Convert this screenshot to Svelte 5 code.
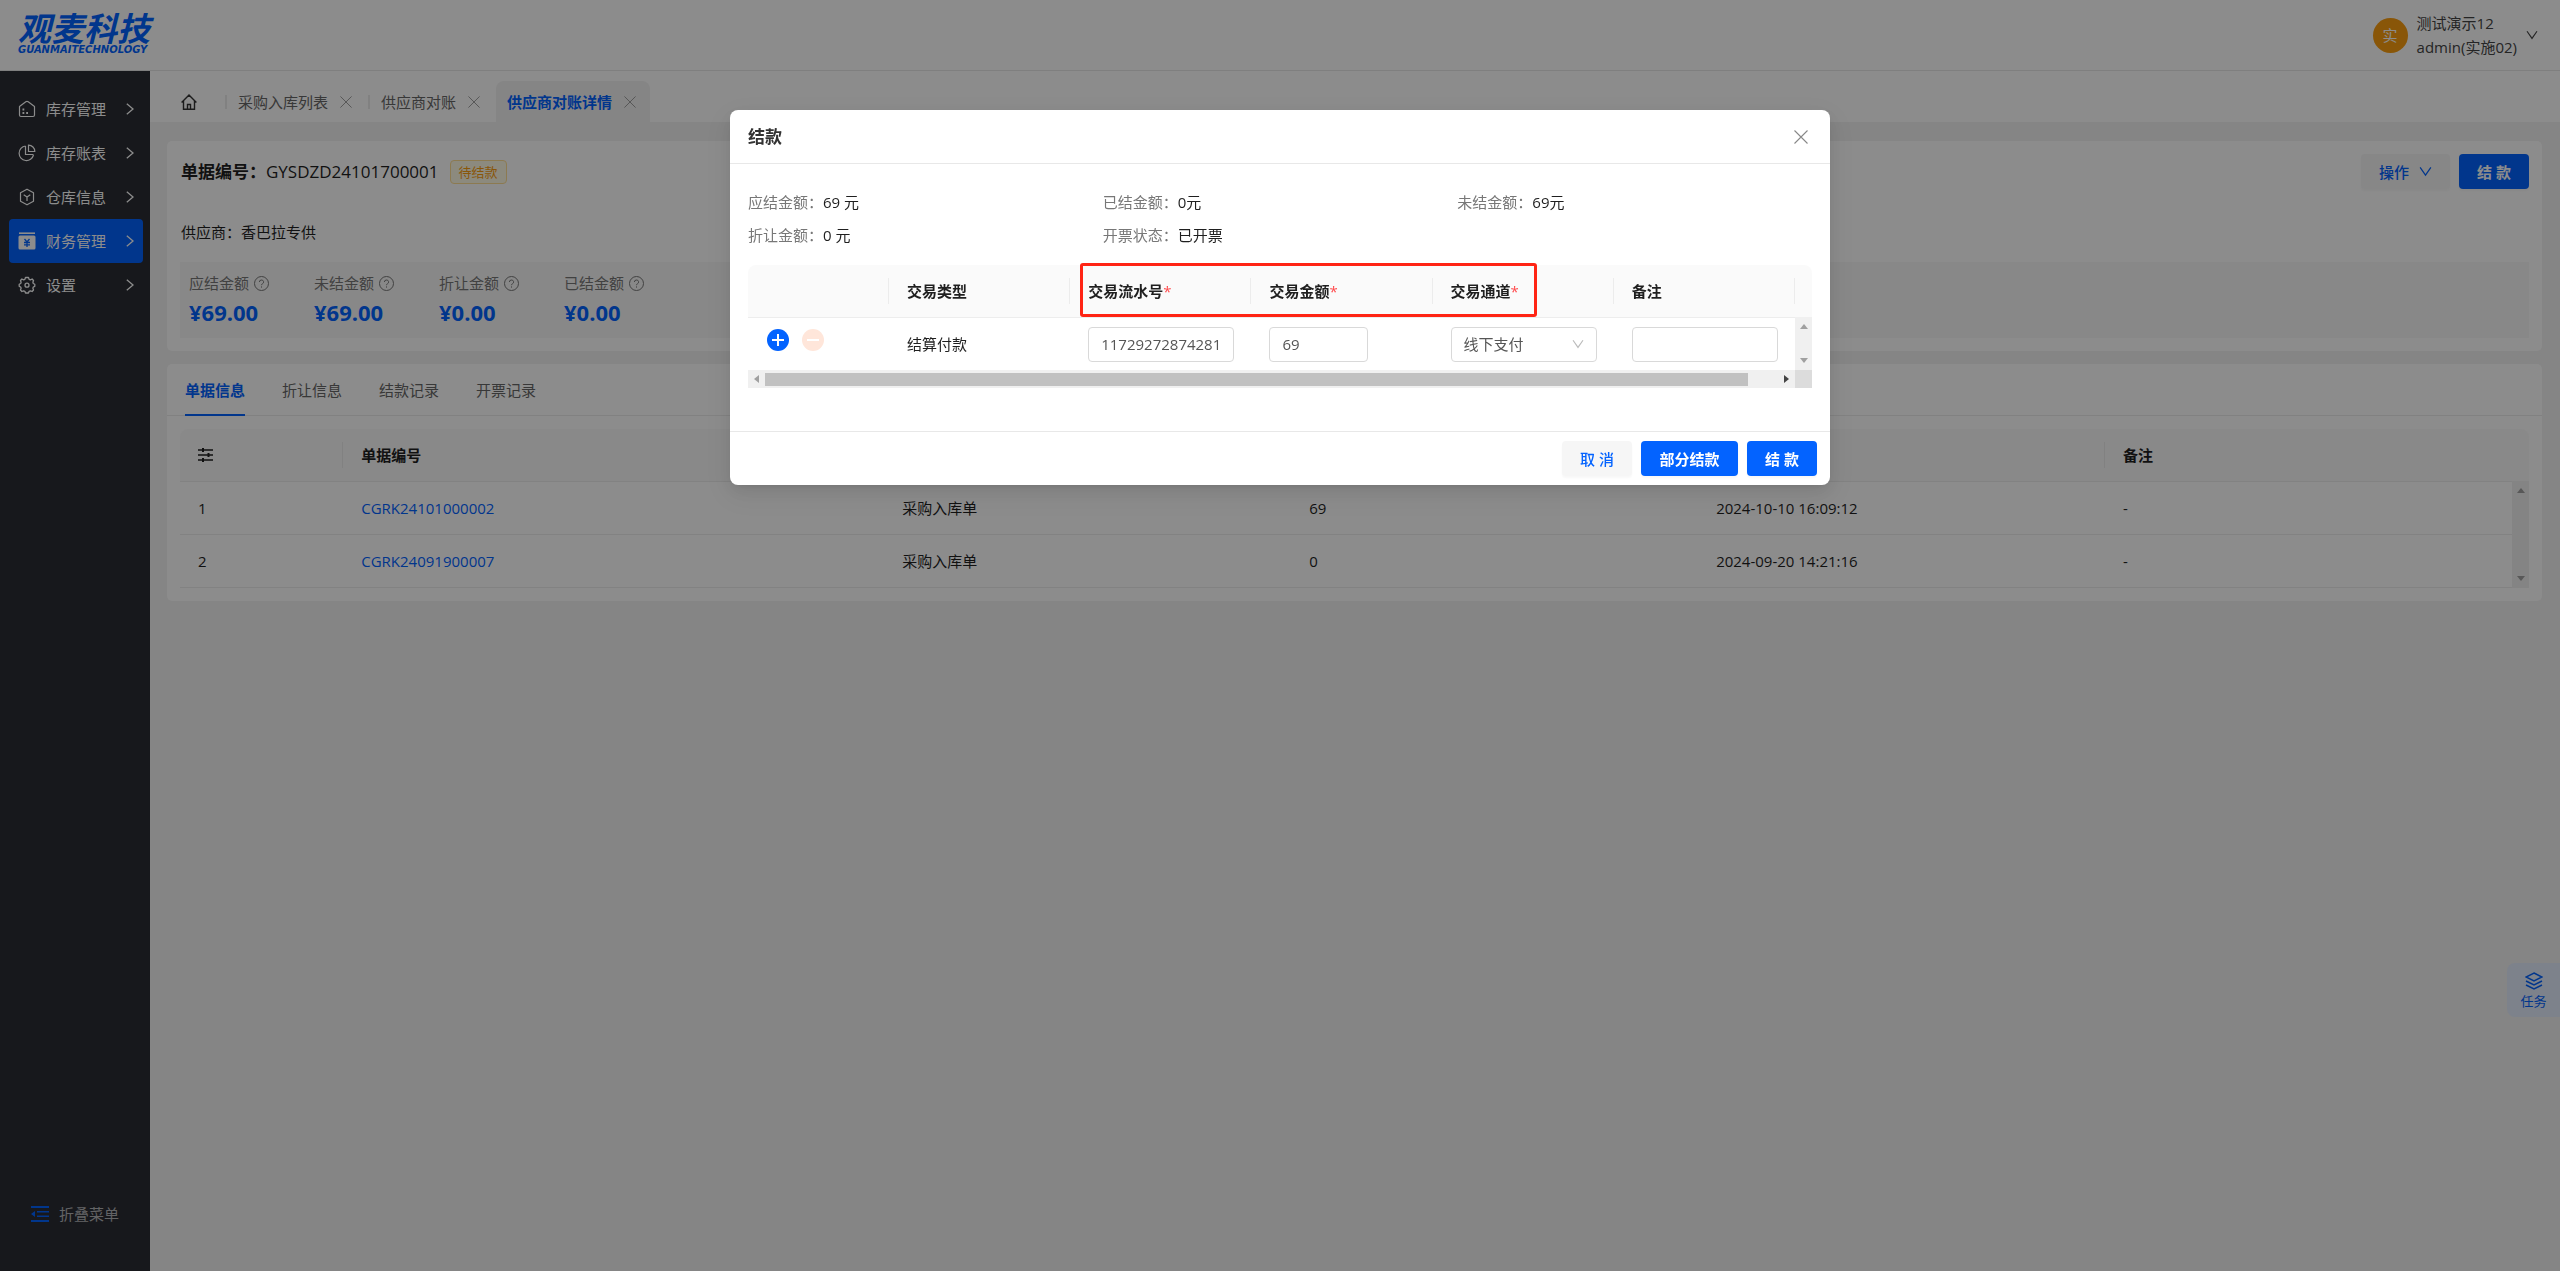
<script lang="ts">
  let menus = [
    { name: '库存管理', icon: 'house' },
    { name: '库存账表', icon: 'pie' },
    { name: '仓库信息', icon: 'hex' },
    { name: '财务管理', icon: 'money' },
    { name: '设置', icon: 'gear' }
  ];

  let tabs = ['采购入库列表', '供应商对账', '供应商对账详情'];
  let detailTabs = ['单据信息', '折让信息', '结款记录', '开票记录'];

  let summary = [
    { label: '应结金额', value: '¥69.00' },
    { label: '未结金额', value: '¥69.00' },
    { label: '折让金额', value: '¥0.00' },
    { label: '已结金额', value: '¥0.00' }
  ];

  let rows = [
    { code: 'CGRK24101000002', type: '采购入库单', amount: '69', time: '2024-10-10 16:09:12', remark: '-' },
    { code: 'CGRK24091900007', type: '采购入库单', amount: '0', time: '2024-09-20 14:21:16', remark: '-' }
  ];

  let info = [
    { label: '应结金额', value: '69 元' },
    { label: '已结金额', value: '0元' },
    { label: '未结金额', value: '69元' },
    { label: '折让金额', value: '0 元' },
    { label: '开票状态', value: '已开票' }
  ];

  let activeMenu = $state('财务管理');
  let activeTab = $state('供应商对账详情');
  let activeDetail = $state('单据信息');
  let open = $state(true);

  let serial = $state('11729272874281');
  let amount = $state('69');
  let channel = $state('线下支付');
  let remark = $state('');
</script>

{#snippet cross(size: number)}
  <svg width={size} height={size} viewBox="0 0 14 14" fill="none" stroke="currentColor" stroke-width="1.1">
    <path d="M.5.5l13 13M13.5.5l-13 13" />
  </svg>
{/snippet}

{#snippet down(size: number)}
  <svg width={size} height={size} viewBox="0 0 14 14" fill="none" stroke="currentColor" stroke-width="1.3">
    <path d="M1.2 2.6L7 11l5.800-8.400" />
  </svg>
{/snippet}

{#snippet vscroll()}
  <div class="vscroll">
    <svg width="8" height="5" viewBox="0 0 8 5"><path d="M0 5L4 0l4 5z" fill="#a0a0a0" /></svg>
    <svg width="8" height="5" viewBox="0 0 8 5"><path d="M0 0l4 5 4-5z" fill="#a0a0a0" /></svg>
  </div>
{/snippet}

<div class="app">
  <header class="header">
    <div class="logo">
      <span class="logo-cn">观麦科技</span>
      <span class="logo-en">GUANMAITECHNOLOGY</span>
    </div>
    <div class="user">
      <span class="avatar">实</span>
      <div class="user-text">
        <div>测试演示12</div>
        <div>admin(实施02)</div>
      </div>
      {@render down(12)}
    </div>
  </header>

  <div class="main">
    <nav class="sidebar">
      <div class="menus">
        {#each menus as m}
          <button class="menu" class:active={m.name === activeMenu} onclick={() => (activeMenu = m.name)}>
            <svg class="menu-icon" width="18" height="18" viewBox="0 0 18 18" fill="none" stroke="currentColor" stroke-width="1.2">
              {#if m.icon === 'house'}
                <path d="M1.500 6.500L7.800 1.800a2 2 0 0 1 2.400 0L16.500 6.500V15a1.500 1.500 0 0 1-1.500 1.500H3A1.500 1.500 0 0 1 1.500 15z" stroke-linejoin="round" />
                <path d="M4.500 9.500h1.800M4.500 13h1.800M8.200 13H10" stroke-width="1.800" />
              {:else if m.icon === 'pie'}
                <path d="M7.500 2A7.300 7.300 0 1 0 15.500 11" />
                <path d="M7.500 2v8.500h8" />
                <path d="M10.500 1.200v6.300h6.300a6.300 6.300 0 0 0-6.300-6.300z" />
              {:else if m.icon === 'hex'}
                <path d="M9 1.200L15.500 4.800v8.400L9 16.800 2.500 13.200V4.800z" stroke-linejoin="round" />
                <path d="M5.700 6.800L9 9l3.300-2.200M9 9v4" />
              {:else if m.icon === 'money'}
                <path d="M1 1.200h16" stroke-width="1.600" />
                <path d="M2 3.500h14a1.500 1.500 0 0 1 1.500 1.500v11a1.500 1.500 0 0 1-1.500 1.500H2A1.500 1.500 0 0 1 .5 16V5A1.500 1.500 0 0 1 2 3.500z" fill="currentColor" stroke="none" />
                <path d="M6.500 7L9 10l2.500-3M9 10v5M6 10.500h6M6 12.800h6" stroke="#0363ff" stroke-width="1.300" />
              {:else}
                <path d="M7.500 1.500h3l.6 1.800 1.300.5 1.700-.8 1.400 1.500-.6 1.800.4 1.200 1.500.8v2l-1.500.7-.4 1.300.6 1.700-1.400 1.500-1.700-.7-1.300.5-.6 1.700h-3l-.6-1.700-1.300-.5-1.700.7L2.500 14l.6-1.700-.4-1.300-1.500-.7v-2l1.500-.8.4-1.200-.6-1.800L3.900 3l1.700.8 1.300-.5z" stroke-width="1.300" stroke-linejoin="round" />
                <circle cx="9" cy="9.200" r="2" stroke-width="1.300" />
              {/if}
            </svg>
            <span>{m.name}</span>
            <svg width="8" height="12" viewBox="0 0 8 12" fill="none" stroke="currentColor" stroke-width="1.3"><path d="M.8.8L7 6 .8 11.200" /></svg>
          </button>
        {/each}
      </div>
      <button class="fold">
        <svg width="18" height="16" viewBox="0 0 18 16" fill="#0363ff">
          <path d="M0 0h18v2H0zM6 5h12v1.500H6zM6 9.500h12V11H6zM0 14h18v2H0zM0 8l4-3v6z" />
        </svg>
        折叠菜单
      </button>
    </nav>

    <div class="body">
      <div class="tabs">
        <button class="home" aria-label="首页">
          <svg width="16" height="16" viewBox="0 0 16 16" fill="none" stroke="currentColor" stroke-width="1.400">
            <path d="M.6 8.400L8 1l7.400 7.400M2.500 7v8.200h11V7M6.500 15v-4.500h3V15" />
          </svg>
        </button>
        {#each tabs as t}
          <div class="tab" class:active={t === activeTab}>
            <button onclick={() => (activeTab = t)}>{t}</button>
            <button class="tab-close" aria-label="关闭">{@render cross(12)}</button>
          </div>
        {/each}
      </div>

      <div class="content">
        <section class="card">
          <div class="title-row">
            <h1>单据编号：<span>GYSDZD24101700001</span></h1>
            <span class="tag">待结款</span>
            <div class="actions">
              <button class="btn">操作 {@render down(13)}</button>
              <button class="btn primary" onclick={() => (open = true)}>结 款</button>
            </div>
          </div>
          <p class="supplier">供应商：香巴拉专供</p>
          <div class="summary">
            {#each summary as s}
              <div class="sum-item">
                <div class="sum-label">
                  {s.label}
                  <svg width="15" height="15" viewBox="0 0 15 15" fill="none" stroke="currentColor">
                    <circle cx="7.500" cy="7.500" r="7" />
                    <path d="M5.400 6a2.100 2 0 1 1 3 1.800c-.6.300-.9.600-.9 1.400M7.500 10.400v1.200" />
                  </svg>
                </div>
                <div class="sum-value">{s.value}</div>
              </div>
            {/each}
          </div>
        </section>

        <section class="card detail">
          <div class="detail-tabs">
            {#each detailTabs as t}
              <button class:active={t === activeDetail} onclick={() => (activeDetail = t)}>{t}</button>
            {/each}
          </div>
          <div class="grid">
            <table class="list">
              <thead>
                <tr>
                  <th class="col-no">
                    <svg width="15" height="14" viewBox="0 0 15 14" fill="none" stroke="currentColor" stroke-width="1.400">
                      <path d="M0 2h15M0 7h15M0 12h15" />
                      <path d="M5 0v4M10.500 5v4M5 10v4" stroke-width="2" />
                    </svg>
                  </th>
                  <th class="col-code">单据编号</th>
                  <th>单据类型</th>
                  <th>金额</th>
                  <th>时间</th>
                  <th>备注</th>
                </tr>
              </thead>
              <tbody>
                {#each rows as r, i}
                  <tr>
                    <td>{i + 1}</td>
                    <td><a href="#{r.code}">{r.code}</a></td>
                    <td>{r.type}</td>
                    <td>{r.amount}</td>
                    <td>{r.time}</td>
                    <td>{r.remark}</td>
                  </tr>
                {/each}
              </tbody>
            </table>
            <div class="gutter">
              {@render vscroll()}
            </div>
          </div>
        </section>
      </div>
    </div>
  </div>

  <button class="task">
    <svg width="18" height="18" viewBox="0 0 18 18" fill="none" stroke="currentColor" stroke-width="1.500">
      <path d="M9 1l8 4-8 4-8-4zM1 9l8 4 8-4M1 13l8 4 8-4" />
    </svg>
    任务
  </button>
</div>

{#if open}
  <div class="mask">
    <div class="modal" role="dialog" aria-modal="true" aria-labelledby="modal-title">
      <div class="modal-head">
        <h2 id="modal-title">结款</h2>
        <button class="close" aria-label="关闭" onclick={() => (open = false)}>{@render cross(14)}</button>
      </div>

      <div class="modal-body">
        <div class="info">
          {#each info as item}
            <div><span>{item.label}：</span>{item.value}</div>
          {/each}
        </div>

        <div class="grid">
          <table class="pay">
            <thead>
              <tr>
                <th class="col-op"></th>
                <th>交易类型</th>
                <th>交易流水号<i>*</i></th>
                <th>交易金额<i>*</i></th>
                <th>交易通道<i>*</i></th>
                <th>备注</th>
              </tr>
            </thead>
            <tbody>
              <tr>
                <td>
                  <div class="ops">
                    <button class="round" aria-label="添加">
                      <svg width="12" height="12" viewBox="0 0 12 12" stroke="#fff" stroke-width="2"><path d="M0 6h12M6 0v12" /></svg>
                    </button>
                    <button class="round off" aria-label="删除" disabled>
                      <svg width="12" height="12" viewBox="0 0 12 12" stroke="#fff" stroke-width="2"><path d="M0 6h12" /></svg>
                    </button>
                  </div>
                </td>
                <td>结算付款</td>
                <td><input aria-label="交易流水号" bind:value={serial} /></td>
                <td><input class="short" aria-label="交易金额" bind:value={amount} /></td>
                <td>
                  <div class="select">
                    <select aria-label="交易通道" bind:value={channel}>
                      <option>线下支付</option>
                    </select>
                    {@render down(12)}
                  </div>
                </td>
                <td><input aria-label="备注" bind:value={remark} /></td>
              </tr>
            </tbody>
          </table>
          <div class="gutter">
            {@render vscroll()}
          </div>
          <div class="highlight"></div>
        </div>
        <div class="hscroll">
          <div class="track">
            <svg width="5" height="8" viewBox="0 0 5 8"><path d="M5 0v8L0 4z" fill="#a0a0a0" /></svg>
            <div class="rail"><div class="thumb"></div></div>
            <svg width="5" height="8" viewBox="0 0 5 8"><path d="M0 0v8l5-4z" fill="#444" /></svg>
          </div>
          <div class="corner"></div>
        </div>
      </div>

      <div class="modal-foot">
        <button class="btn" onclick={() => (open = false)}>取 消</button>
        <button class="btn primary wide">部分结款</button>
        <button class="btn primary">结 款</button>
      </div>
    </div>
  </div>
{/if}

<style>
  :global(body) {
    font-family: "Open Sans", "Noto Sans CJK SC", sans-serif;
    font-size: 15px;
    line-height: 24px;
    color: #1f1f1f;
  }

  * {
    box-sizing: border-box;
  }

  button {
    font: inherit;
    color: inherit;
    background: none;
    border: none;
    padding: 0;
    cursor: pointer;
  }

  svg {
    display: block;
    flex: none;
  }

  h1, h2, p {
    margin: 0;
  }

  a {
    color: #0363ff;
    text-decoration: none;
  }

  .app {
    display: flex;
    flex-direction: column;
    min-height: 100vh;
    background: #f2f2f2;
  }

  .header {
    display: flex;
    justify-content: space-between;
    align-items: center;
    height: 71px;
    padding: 0 22px 0 18px;
    background: #fff;
    border-bottom: 1px solid #e8e8e8;
  }

  .logo {
    display: flex;
    flex-direction: column;
    color: #0363ff;
    font-weight: 700;
    font-style: italic;
  }

  .logo-cn {
    font-family: "Noto Sans CJK SC", sans-serif;
    font-size: 33px;
    line-height: 30px;
  }

  .logo-en {
    font-family: "DejaVu Sans", sans-serif;
    font-size: 10px;
    line-height: 16px;
  }

  .user {
    display: flex;
    align-items: center;
    gap: 9px;
    color: #444;
  }

  .avatar {
    width: 35px;
    height: 35px;
    line-height: 35px;
    border-radius: 50%;
    text-align: center;
    background: #fa9d0f;
    color: #fff;
  }

  .main {
    display: flex;
    flex: 1;
  }

  .sidebar {
    display: flex;
    flex-direction: column;
    justify-content: space-between;
    width: 150px;
    padding: 16px 7px 45px 9px;
    background: #2a2c33;
    color: #fff;
  }

  .menu {
    display: flex;
    align-items: center;
    gap: 10px;
    width: 100%;
    height: 44px;
    padding: 0 9px;
    border-radius: 4px;
    text-align: left;
  }

  .menu span {
    flex: 1;
  }

  .menu.active {
    background: #0363ff;
  }

  .fold {
    display: flex;
    align-items: center;
    gap: 10px;
    padding-left: 22px;
    color: #b5b5b8;
  }

  .body {
    flex: 1;
    min-width: 0;
  }

  .tabs {
    display: flex;
    align-items: flex-end;
    height: 51px;
    padding-left: 31px;
    background: #fff;
    color: #666;
  }

  .home {
    display: flex;
    align-items: center;
    width: 44px;
    height: 41px;
    color: #333;
  }

  .tab {
    display: flex;
    align-items: center;
    gap: 11px;
    height: 41px;
    padding-right: 15px;
    border-radius: 8px 8px 0 0;
  }

  .tab::before {
    content: '';
    width: 2px;
    height: 14px;
    background: #ebebeb;
  }

  .tab.active {
    padding: 0 13px 0 11px;
    background: #f2f2f2;
    color: #0363ff;
    font-weight: 700;
  }

  .tab.active::before {
    display: none;
  }

  .tab-close {
    padding: 0 1px;
    color: #999;
  }

  .content {
    display: flex;
    flex-direction: column;
    gap: 13px;
    padding: 19px 18px 19px 17px;
  }

  .card {
    padding: 13px;
    background: #fff;
    border-radius: 5px;
  }

  .title-row {
    display: flex;
    align-items: center;
    gap: 11px;
    height: 35px;
    padding-left: 1px;
  }

  h1 {
    font-size: 17px;
    font-weight: 700;
  }

  h1 span {
    font-weight: 400;
  }

  .tag {
    padding: 0 8px;
    border: 1px solid #ffdf94;
    border-radius: 4px;
    background: #fffbe6;
    color: #fa9d0f;
    font-size: 13px;
    line-height: 22px;
  }

  .actions {
    display: flex;
    gap: 9px;
    margin-left: auto;
  }

  .btn {
    display: flex;
    align-items: center;
    justify-content: center;
    gap: 10px;
    height: 35px;
    min-width: 70px;
    padding: 0 18px;
    border-radius: 4px;
    background: #f6f6f6;
    color: #0363ff;
    font-weight: 500;
    box-shadow: 0 2px 2px rgba(0, 0, 0, 0.03);
  }

  .btn.primary {
    padding: 0;
    background: #0363ff;
    color: #fff;
    font-weight: 700;
  }

  .btn.wide {
    width: 97px;
  }

  .supplier {
    padding: 31px 1px 18px;
  }

  .summary {
    display: flex;
    height: 76px;
    padding: 9px;
    background: #f8f8f8;
  }

  .sum-item {
    width: 125px;
  }

  .sum-label {
    display: flex;
    align-items: center;
    gap: 5px;
    color: #777;
  }

  .sum-value {
    color: #0363ff;
    font-size: 22px;
    font-weight: 700;
    line-height: 34px;
  }

  .detail {
    padding-top: 0;
  }

  .detail-tabs {
    display: flex;
    gap: 37px;
    height: 52px;
    margin: 0 -13px 13px;
    padding: 0 18px;
    border-bottom: 1px solid #ececec;
    color: #666;
  }

  .detail-tabs button {
    height: 52px;
    padding-top: 2px;
    border-bottom: 2px solid transparent;
  }

  .detail-tabs .active {
    border-color: #0363ff;
    color: #0363ff;
    font-weight: 700;
  }

  .grid {
    position: relative;
    display: flex;
    border-radius: 8px 8px 0 0;
    background: linear-gradient(#fafafa, #fafafa) top / 100% 52px no-repeat;
  }

  table {
    flex: 1;
    width: 100%;
    min-width: 0;
    table-layout: fixed;
    border-collapse: separate;
    border-spacing: 0;
  }

  th, td {
    height: 53px;
    padding: 0 18px;
    border-bottom: 1px solid #ededed;
    text-align: left;
    white-space: nowrap;
  }

  th {
    background: linear-gradient(#ececec, #ececec) right / 1px 26px no-repeat;
    font-weight: 700;
  }

  .list .col-no {
    width: 7%;
  }

  .list .col-code {
    width: 23.2%;
  }

  .list th:last-child {
    background: none;
  }

  .gutter {
    display: flex;
    width: 17px;
    padding-top: 52px;
  }

  .vscroll {
    display: flex;
    flex: 1;
    flex-direction: column;
    align-items: center;
    justify-content: space-between;
    padding: 7px 0;
    background: #f0f0f0;
  }

  .task {
    position: fixed;
    right: 0;
    top: 963px;
    display: flex;
    flex-direction: column;
    align-items: center;
    gap: 1px;
    width: 53px;
    height: 54px;
    padding-top: 9px;
    border-radius: 8px 0 0 8px;
    background: #e4edfd;
    color: #0363ff;
    font-size: 13px;
    line-height: 20px;
  }

  .mask {
    position: fixed;
    inset: 0;
    padding-top: 110px;
    background: rgba(0, 0, 0, 0.45);
  }

  .modal {
    width: 1100px;
    max-width: 100%;
    margin: 0 auto;
    border-radius: 8px;
    background: #fff;
    box-shadow: 0 3px 6px -4px rgba(0, 0, 0, 0.12), 0 6px 16px rgba(0, 0, 0, 0.08), 0 9px 28px 8px rgba(0, 0, 0, 0.05);
  }

  .modal-head {
    display: flex;
    align-items: center;
    justify-content: space-between;
    height: 54px;
    padding: 0 22px 0 18px;
    border-bottom: 1px solid #e8e8e8;
  }

  h2 {
    font-size: 17px;
    font-weight: 700;
    color: #333;
  }

  .close {
    color: #888;
  }

  .modal-body {
    padding: 22px 18px 43px;
  }

  .info {
    display: grid;
    grid-template-columns: repeat(3, 1fr);
    padding-bottom: 13px;
    line-height: 33px;
  }

  .info span {
    color: #777;
  }

  .pay .col-op {
    width: 141px;
  }

  .pay td {
    height: 52px;
    border-bottom: none;
  }

  i {
    color: #ff4d4f;
    font-style: normal;
    font-weight: 400;
  }

  .ops {
    display: flex;
    gap: 13px;
    padding: 0 1px 9px;
  }

  .round {
    display: flex;
    align-items: center;
    justify-content: center;
    width: 22px;
    height: 22px;
    border-radius: 50%;
    background: #0363ff;
  }

  .round.off {
    background: #ffe6da;
  }

  input, select {
    display: block;
    width: 146px;
    height: 35px;
    padding: 0 12px;
    border: 1px solid #d9d9d9;
    border-radius: 4px;
    background: #fff;
    color: #555;
    font: inherit;
    appearance: none;
  }

  .short {
    width: 99px;
  }

  .select {
    position: relative;
    width: 146px;
    color: #bbb;
  }

  .select svg {
    position: absolute;
    right: 13px;
    top: 11px;
    pointer-events: none;
  }

  .highlight {
    position: absolute;
    top: -2px;
    left: 332px;
    width: 457px;
    height: 54px;
    border: 3px solid #ff2414;
    border-radius: 3px;
    pointer-events: none;
  }

  .hscroll {
    display: flex;
    height: 18px;
    background: #f0f0f0;
  }

  .track {
    display: flex;
    flex: 1;
    align-items: center;
    gap: 6px;
    padding: 0 6px;
  }

  .rail {
    flex: 1;
  }

  .thumb {
    width: 97%;
    height: 13px;
    background: #c1c1c1;
  }

  .corner {
    width: 17px;
    background: #dcdcdc;
  }

  .modal-foot {
    display: flex;
    align-items: center;
    justify-content: flex-end;
    gap: 9px;
    height: 54px;
    padding-right: 13px;
    border-top: 1px solid #e8e8e8;
  }
</style>
